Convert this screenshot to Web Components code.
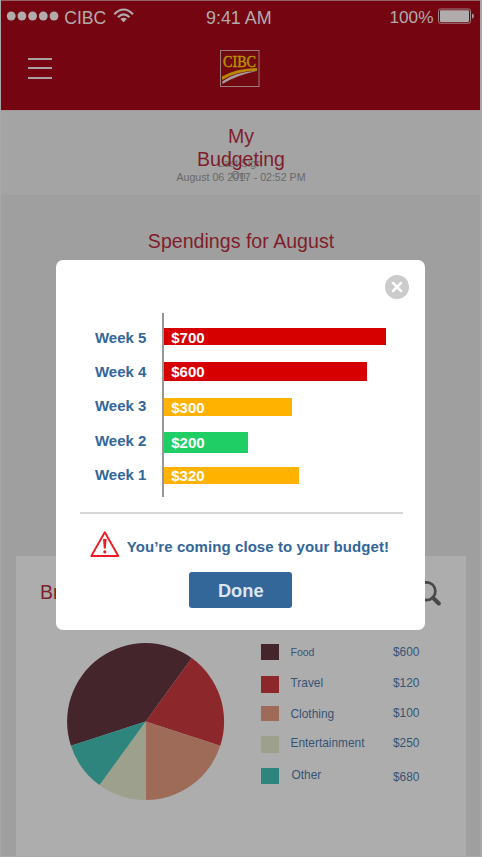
<!DOCTYPE html>
<html lang="en"><head><meta charset="utf-8"><title>My Budgeting</title>
<style>
html,body{margin:0;width:482px;height:857px;overflow:hidden;background:#a8a8a8;font-family:"Liberation Sans",Arial,sans-serif}
</style></head><body>
<budget-app></budget-app>
<script>
const define=(name,html,setup)=>customElements.define(name,class extends HTMLElement{
  connectedCallback(){
    if(this.shadowRoot)return;
    const t=document.createElement('template');
    t.innerHTML=html;
    this.attachShadow({mode:'open'}).append(t.content.cloneNode(true));
    if(setup)setup(this,this.shadowRoot);
  }
});

define('status-bar',`<style>
:host{display:grid;grid-template-columns:140px 1fr 96px;height:36px;line-height:36px;color:#b0acac;font-size:17.6px;white-space:nowrap}
div{display:flex}.mid{font-size:17.9px;padding-left:66px}.right{font-size:17.2px;line-height:35px;padding-left:5.5px}
.left svg{flex:none}svg{display:block}.c{width:49px;padding-left:.2px;box-sizing:border-box}
</style>
<div class="left"><svg width="64" height="36"><g fill="#b0acac"><ellipse cx="11.2" cy="16" rx="4.4" ry="4.6"/><ellipse cx="21.9" cy="16" rx="4.4" ry="4.6"/><ellipse cx="32.6" cy="16" rx="4.4" ry="4.6"/><ellipse cx="43.3" cy="16" rx="4.4" ry="4.6"/><ellipse cx="54" cy="16" rx="4.4" ry="4.6"/></g></svg><span class="c">CIBC</span>
<svg width="24" height="36"><g fill="none" stroke="#b0acac" stroke-width="2.1"><path d="M1.3 14.2Q10.6 4.8 20 14.2"/><path d="M4.9 17.3Q10.6 11.5 16.4 17.3"/></g><path fill="#b0acac" d="M7.4 19.1Q10.6 16.2 13.9 19.1L10.6 22.3Z"/></svg></div>
<div class="mid">9:41 AM</div>
<div class="right"><span style="width:48px">100%</span><svg width="38" height="36"><rect x=".5" y="9" width="32" height="14.2" rx="1.8" fill="none" stroke="#a08487"/><rect x="2" y="10.3" width="29" height="11.6" rx=".8" fill="#b0acac"/><path fill="#a99b9c" d="M34 13.5q2 .8 2 2.6t-2 2.6z"/></svg></div>`);

define('bank-logo',`<style>:host{display:block;width:40px;height:38px}svg{display:block;overflow:visible}</style>
<svg width="40" height="38"><rect x=".5" y=".5" width="38.5" height="36" fill="#720910" stroke="#9b7b7d" stroke-width="1"/>
<text x="3" y="17" textLength="33" lengthAdjust="spacingAndGlyphs" font-family="Liberation Serif,serif" font-size="17" fill="#b69300" stroke="#b69300" stroke-width=".5">CIBC</text>
<path fill="#b58900" d="M2 26.5Q17 18.2 37 18V21Q17 20.8 2 30Z"/><path fill="#a99a9b" d="M2.4 31.2Q16 21.7 37 21Q18 24.4 2.4 34Z"/></svg>`);

define('app-header',`<style>
:host{display:block;height:110px;box-sizing:border-box;background:#750611;box-shadow:inset 0 1px #956369}
.nav{display:grid;grid-template-columns:220px 40px;padding-top:14px}
.menu{display:block;margin:8px 0 0 28px}
</style><status-bar></status-bar><div class="nav"><svg class="menu" width="24" height="21"><path d="M0 1h24M0 10h24M0 20h24" stroke="#aba1a2" stroke-width="2"/></svg><bank-logo></bank-logo></div>`);

define('page-title',`<style>
:host{display:block;position:relative;height:84.5px;box-sizing:border-box;padding-top:15px;text-align:center;background:#a4a4a4;border-top:1px solid #a39799}
h1{font-size:19.5px;font-weight:400;line-height:23px;margin:-1px auto 0;width:100px;color:#7f1e2b;position:relative;left:1px}
p{margin:0;color:#696969;font-size:10.6px}
.last{position:absolute;left:210px;width:60px;top:45.5px;line-height:12px}
.date{line-height:12px;margin-top:0;padding-left:2px}
</style><p class="last">Last Sign<br>On:</p><h1>My<br>Budgeting</h1><p class="date">August 06 2017 - 02:52 PM</p>`);

define('pie-chart',`<style>:host{display:block}svg{display:block}</style><svg width="158" height="158"></svg>`,(el,r)=>{
  const c=78.6,R=78.5,p=a=>[c+R*Math.sin(a*Math.PI/180),c-R*Math.cos(a*Math.PI/180)];
  const cuts=[[252,396,'#43252b'],[36,108,'#8c282c'],[108,180,'#9e6b59'],[180,216,'#9da08c'],[216,252,'#2e857e']];
  r.querySelector('svg').innerHTML=cuts.map(([a,b,f])=>`<path fill="${f}" d="M${c} ${c}L${p(a)}A${R} ${R} 0 0 1 ${p(b)}Z"/>`).join('');
});

define('legend-item',`<style>
:host{display:grid;grid-template-columns:29.5px 102.5px 40px;height:30px;color:#385475;font-size:11.9px;line-height:16px}
i{display:block;width:18px;height:var(--h);margin-top:var(--s);background:var(--c)}
.n{margin-top:var(--n);margin-left:var(--x,0);font-size:var(--f,11.9px)}.a{margin-top:var(--a)}
</style><i></i><span class="n"><slot></slot></span><span class="a"></span>`,(el,r)=>{
  r.querySelector('.a').textContent=el.getAttribute('amount');
});

define('breakdown-card',`<style>
:host{display:block;width:450px;height:300px;margin-left:16px;background:#adadad}
header{display:flex;justify-content:space-between;padding:25px 25px 0 24px;height:62px;box-sizing:border-box}
h2{margin:0;font-size:19.5px;font-weight:400;line-height:23px;color:#7f1e2b}
svg{display:block}.body{display:grid;grid-template-columns:194px 1fr;padding:25px 0 0 51px}
</style><header><h2>Breakdown</h2><svg width="26" height="28"><circle cx="11.5" cy="10.2" r="8.9" fill="none" stroke="#484848" stroke-width="2.7"/><path d="M18 16.8l5.8 5.7" stroke="#484848" stroke-width="4" stroke-linecap="round"/></svg></header>
<div class="body"><pie-chart></pie-chart><div>
<legend-item amount="$600" style="--c:#43252b;--s:1px;--h:15.5px;--n:1.4px;--a:1.2px;--f:10.5px">Food</legend-item>
<legend-item amount="$120" style="--c:#8c282c;--s:3px;--h:16.5px;--n:2.3px;--a:2.3px">Travel</legend-item>
<legend-item amount="$100" style="--c:#9e6b59;--s:3px;--h:15px;--n:3.3px;--a:2.3px">Clothing</legend-item>
<legend-item amount="$250" style="--c:#9da08c;--s:3px;--h:16.5px;--n:2px;--a:2.3px">Entertainment</legend-item>
<legend-item amount="$680" style="--c:#2e857e;--s:5.3px;--h:15.5px;--n:4px;--a:6.3px;--x:1px">Other</legend-item>
</div></div>`);

define('week-row',`<style>
:host{display:grid;grid-template-columns:68px 1fr;height:34.3px;font-weight:700;font-size:15px;line-height:20px;color:#336699}
.b{display:flex;align-items:center;box-sizing:border-box;margin-top:var(--s);height:var(--h);width:var(--w);background:var(--c);color:#fff;padding:var(--p,2px) 0 0 8.3px}
.l{white-space:nowrap;padding-top:var(--l,0)}
</style><span class="l"><slot></slot></span><div class="b"></div>`,(el,r)=>{
  r.querySelector('.b').textContent=el.getAttribute('amount');
});

define('week-chart',`<style>
:host{display:block;position:relative;height:184px;padding:15px 0 0 39.3px;box-sizing:border-box}
:host::after{content:"";position:absolute;left:106.3px;top:0;width:1.6px;height:184px;background:#969696}
</style>
<week-row amount="$700" style="--c:#d60000;--s:0;--h:17.7px;--w:223.5px;--p:3.6px">Week 5</week-row>
<week-row amount="$600" style="--c:#d60000;--s:-.3px;--h:19px;--w:204px">Week 4</week-row>
<week-row amount="$300" style="--c:#ffb200;--s:1.5px;--h:18.8px;--w:128.7px">Week 3</week-row>
<week-row amount="$200" style="--c:#1fcf65;--s:1.2px;--h:21.3px;--w:85px;--l:.8px">Week 2</week-row>
<week-row amount="$320" style="--c:#ffb200;--s:1.8px;--h:17.6px;--w:136px">Week 1</week-row>`);

define('budget-dialog',`<style>
:host{display:block;position:absolute;left:55.7px;top:260.4px;width:369.8px;height:369.2px;background:#fff;border-radius:7px;overflow:hidden}
.close{display:block;margin:14.6px 0 0 329px}
week-chart{margin-top:13.6px}hr{margin:15.9px 22.5px 0 24.5px;border:0;height:2px;background:#d6d6d6}
.msg{display:flex;padding:17px 0 0 34px;height:40.5px;color:#336699;font-weight:700;font-size:15px;letter-spacing:.075px;line-height:30px;white-space:nowrap}
.msg svg{display:block;margin-right:7px;flex:none}.msg span{padding-top:1px}
button{display:block;margin:0 0 0 133.8px;padding:2px 0 0;box-sizing:border-box;width:102.6px;height:36.5px;border:0;border-radius:3px;background:#336699;color:#dce6f0;font:700 18.3px/34.5px "Liberation Sans",sans-serif}
</style><svg class="close" width="24" height="24"><circle cx="12" cy="12" r="12" fill="#cbcbcb"/><path d="M8 8l8 8M16 8l-8 8" stroke="#fff" stroke-width="2.5" stroke-linecap="round"/></svg>
<week-chart></week-chart><hr>
<div class="msg"><svg width="30" height="27"><path d="M14.8 1.3L28.3 25H1.3Z" fill="none" stroke="#ed1c24" stroke-width="1.9" stroke-linejoin="round"/><path d="M13 8.2q1.8-1 3.6 0l-.8 9.4h-2z" fill="#ed1c24"/><circle cx="14.8" cy="20.8" r="1.6" fill="#ed1c24"/></svg><span>You’re coming close to your budget!</span></div>
<button>Done</button>`);

define('budget-app',`<style>
:host{display:block;position:relative;width:482px;height:857px;overflow:hidden;background:#a8a8a8}
main{width:479px;margin-left:1px;height:856px;background:#9f9f9f}
.in{margin-left:-1px}
.clip{width:479px;overflow:hidden}
.clip>*{width:480px;margin-left:-1px}
h2{margin:0;padding:34.5px 0 0 0;height:361.5px;box-sizing:border-box;width:482px;text-align:center;font-size:19.6px;font-weight:400;line-height:24px;color:#7f1e2b}
</style><main><div class="clip"><app-header></app-header><page-title></page-title></div><div class="in"><h2>Spendings for August</h2><breakdown-card></breakdown-card></div></main><budget-dialog></budget-dialog>`);
</script></body></html>
